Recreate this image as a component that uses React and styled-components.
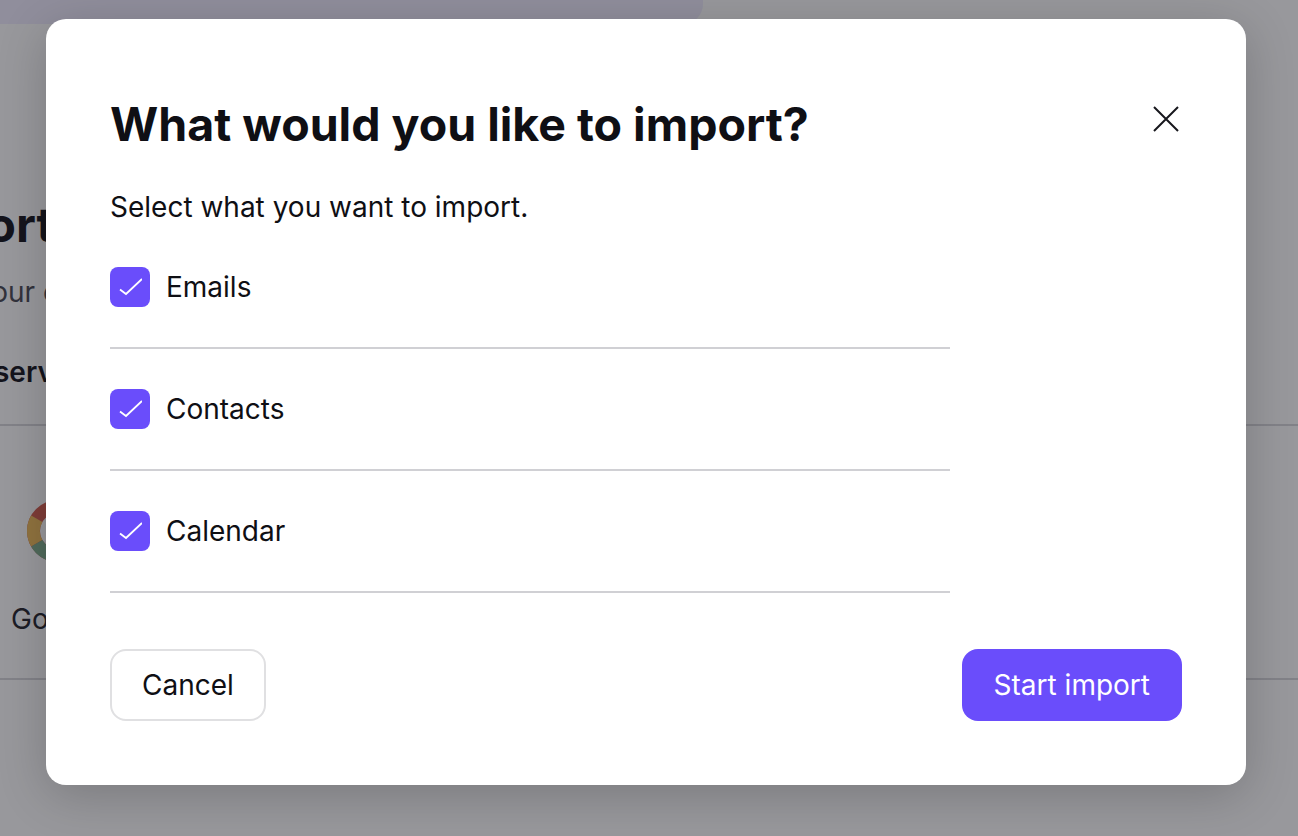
import React from 'react';
import styled, { createGlobalStyle } from 'styled-components';

const Global = createGlobalStyle`
  html, body {
    margin: 0;
    height: 100%;
    background: #fff;
    font-family: Inter, "Noto Sans", sans-serif;
    color: #0f0f14;
  }
`;

const Page = styled.div`
  position: relative;
  width: 1298px;
  height: 836px;
  overflow: hidden;
  background: #fff;
`;

const Banner = styled.div`
  width: 703px;
  height: 24px;
  background: #f0eeff;
  border-bottom-right-radius: 20px;
`;

const Intro = styled.div`
  margin-left: -101px;
  padding-top: 173px;
  display: flex;
  flex-direction: column;
  white-space: nowrap;
`;

const PageTitle = styled.h1`
  margin: 0;
  font-size: 48px;
  line-height: 56px;
  font-weight: 700;
  color: #14141c;
`;

const PageText = styled.p`
  margin: 23px 0 0 -17px;
  font-size: 28px;
  line-height: 32px;
  color: #4a4a55;
`;

const PageLabel = styled.p`
  margin: 48px 0 0 15px;
  font-size: 28px;
  line-height: 32px;
  font-weight: 600;
  color: #14141c;
`;

const ServiceRow = styled.div`
  margin-top: 36px;
  height: 252px;
  border-top: 2px solid #d8d8dc;
  border-bottom: 2px solid #d8d8dc;
  display: flex;
  padding-left: 11px;
`;

const Service = styled.div`
  display: flex;
  flex-direction: column;
  align-items: center;
  padding-top: 74px;
  gap: 41px;
  font-size: 28px;
  line-height: 32px;
  color: #24242c;
`;

const Overlay = styled.div`
  position: absolute;
  inset: 0;
  padding: 19px 0 0 46px;
  background: rgba(20, 20, 30, 0.44);
`;

const Modal = styled.div`
  box-sizing: border-box;
  width: 1200px;
  height: 766px;
  padding: 64px;
  background: #fff;
  border-radius: 20px;
  box-shadow: 0 10px 50px rgba(0, 0, 0, 0.2);
  display: flex;
  flex-direction: column;
`;

const Header = styled.div`
  display: flex;
  justify-content: space-between;
  align-items: center;
  height: 82px;
`;

const Title = styled.h2`
  margin: 0;
  font-size: 46.5px;
  line-height: 82px;
  font-weight: 700;
  color: #0f0f14;
`;

const CloseButton = styled.button`
  width: 28px;
  height: 28px;
  margin: -10px 2px 0 0;
  padding: 0;
  border: 0;
  background: none;
  color: #17171d;
  display: flex;
  align-items: center;
  justify-content: center;
`;

const Subtitle = styled.p`
  margin: 21px 0 0;
  font-size: 28px;
  line-height: 42px;
  color: #0f0f14;
`;

const OptionList = styled.div`
  margin-top: -1px;
  padding-top: 20px;
  width: 840px;
  display: flex;
  flex-direction: column;
  gap: 20px;
`;

const Option = styled.label`
  box-sizing: border-box;
  height: 102px;
  padding: 20px 0 40px;
  display: flex;
  align-items: flex-start;
  gap: 16px;
  border-bottom: 2px solid #d0d0d4;
  font-size: 28px;
  line-height: 40px;
  color: #0f0f14;
`;

const Check = styled.span`
  flex: none;
  width: 40px;
  height: 40px;
  border-radius: 8px;
  background: #6a4dfb;
  display: flex;
  align-items: center;
  justify-content: center;
`;

const Footer = styled.div`
  margin-top: auto;
  display: flex;
  justify-content: space-between;
`;

const Button = styled.button`
  box-sizing: border-box;
  height: 72px;
  border-radius: 16px;
  font-family: inherit;
  font-size: 28px;
  padding: 0 ${(p) => (p.$primary ? '32px' : '30px')};
  border: ${(p) => (p.$primary ? '0' : '2px solid #e0e0e2')};
  background: ${(p) => (p.$primary ? '#6a4dfb' : '#fff')};
  color: ${(p) => (p.$primary ? '#fff' : '#0f0f14')};
`;

const options = ['Emails', 'Contacts', 'Calendar'];

const CheckMark = () => (
  <svg width="24" height="20" viewBox="0 0 24 20" fill="none">
    <path d="M2 12.5 L8 17 L24 2" stroke="#fff" strokeWidth="1.8" />
  </svg>
);

const CloseIcon = () => (
  <svg width="26" height="26" viewBox="0 0 26 26" fill="none">
    <path d="M1 1 L25 25 M25 1 L1 25" stroke="currentColor" strokeWidth="2" />
  </svg>
);

const GoogleLogo = () => (
  <svg width="62" height="62" viewBox="0 0 62 62" fill="none">
    <circle cx="31" cy="31" r="24.5" stroke="#d25d4e" strokeWidth="13" />
    <path d="M9.8 18.75 A24.5 24.5 0 0 0 9.8 43.25" stroke="#f0be5a" strokeWidth="13" />
    <path d="M9.8 43.25 A24.5 24.5 0 0 0 52 44" stroke="#81af8e" strokeWidth="13" />
  </svg>
);

export default function App() {
  return (
    <Page>
      <Global />
      <Banner />
      <Intro>
        <PageTitle>Import</PageTitle>
        <PageText>Import your email</PageText>
        <PageLabel>Email service</PageLabel>
      </Intro>
      <ServiceRow>
        <Service>
          <GoogleLogo />
          Google
        </Service>
      </ServiceRow>
      <Overlay>
        <Modal>
          <Header>
            <Title>What would you like to import?</Title>
            <CloseButton aria-label="Close">
              <CloseIcon />
            </CloseButton>
          </Header>
          <Subtitle>Select what you want to import.</Subtitle>
          <OptionList>
            {options.map((name) => (
              <Option key={name}>
                <Check>
                  <CheckMark />
                </Check>
                {name}
              </Option>
            ))}
          </OptionList>
          <Footer>
            <Button>Cancel</Button>
            <Button $primary>Start import</Button>
          </Footer>
        </Modal>
      </Overlay>
    </Page>
  );
}
